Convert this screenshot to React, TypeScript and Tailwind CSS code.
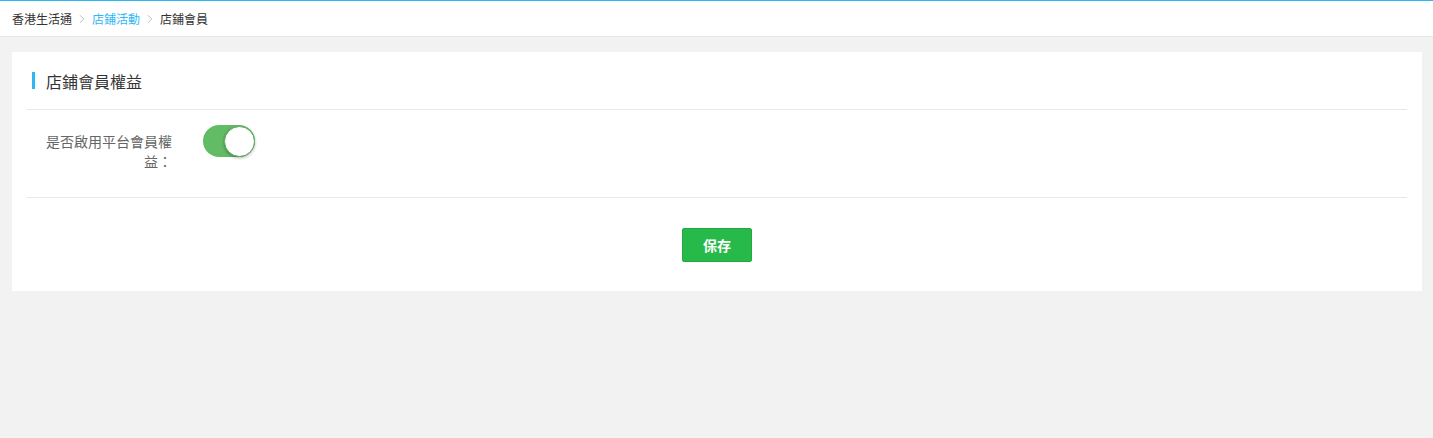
import { ChevronRight } from "lucide-react";

const font = {
  fontFamily: '"Noto Sans CJK TC", "Noto Sans", "Liberation Sans", sans-serif',
};

export default function App() {
  return (
    <div className="min-h-[438px] bg-[#f2f2f2]" style={font}>
      {/* Breadcrumb */}
      <div className="flex h-[37px] items-center border-t border-b border-t-[#2cb8f6] border-b-[#e6e6e6] bg-white px-3 text-[12px]">
        <span className="text-[#333]">香港生活通</span>
        <ChevronRight className="mx-[3px] h-[14px] w-[14px] text-[#b8b8b8]" strokeWidth={1.6} />
        <span className="text-[#2db7f5]">店鋪活動</span>
        <ChevronRight className="mx-[3px] h-[14px] w-[14px] text-[#b8b8b8]" strokeWidth={1.6} />
        <span className="text-[#333]">店鋪會員</span>
      </div>

      {/* Card */}
      <div className="ml-[12px] mr-[11px] mt-[15px] bg-white px-[15px]">
        <div className="flex h-[58px] items-center border-b border-[#e8e8e8] pl-[5px]">
          <span className="h-[17px] w-[3px] bg-[#2db7f5]" />
          <span className="ml-[11px] text-[16px] text-[#333]">店鋪會員權益</span>
        </div>

        <div className="flex items-start border-b border-[#e8e8e8] pb-[26px] pt-[15px]">
          <div className="w-[145px] pl-[15px] pt-[6px] text-right text-[14px] leading-[20px] text-[#666]">
            是否啟用平台會員權益：
          </div>
          <button className="ml-[31px] flex h-[32px] w-[52px] items-center justify-end rounded-full bg-[#62bb65] p-0">
            <span className="h-[31px] w-[31px] rounded-full border border-[#5aa95c] bg-white shadow-[0_1px_3px_rgba(0,0,0,0.3)]" />
          </button>
        </div>

        <div className="flex justify-center pb-[29px] pt-[30px]">
          <button className="h-[34px] w-[70px] rounded-[2px] border border-[#23a943] bg-[#28b94b] text-[14px] font-bold text-white">
            保存
          </button>
        </div>
      </div>
    </div>
  );
}
